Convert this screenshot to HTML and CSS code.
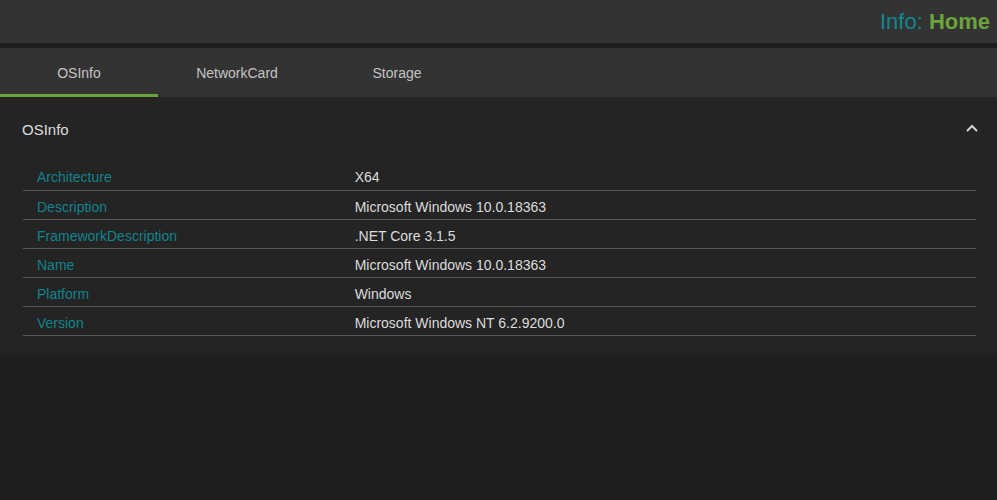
FILE: index.html
```html
<!DOCTYPE html>
<html>
<head>
<meta charset="utf-8">
<link rel="stylesheet" href="styles.css">
</head>
<body>
<header class="topbar">
  <div class="title"><span class="title-info">Info:</span> <span class="title-home">Home</span></div>
</header>
<div class="divider"></div>
<nav class="tabs">
  <div class="tab active">OSInfo</div>
  <div class="tab">NetworkCard</div>
  <div class="tab">Storage</div>
</nav>
<section class="card">
  <div class="card-head">
    <span class="card-title">OSInfo</span>
    <svg class="chevron" width="12" height="8" viewBox="0 0 12 8"><path d="M1 7 L6 2 L11 7" fill="none" stroke="#d0d0d0" stroke-width="2"/></svg>
  </div>
  <table class="info">
    <tr><td class="k">Architecture</td><td class="v">X64</td></tr>
    <tr><td class="k">Description</td><td class="v">Microsoft Windows 10.0.18363</td></tr>
    <tr><td class="k">FrameworkDescription</td><td class="v">.NET Core 3.1.5</td></tr>
    <tr><td class="k">Name</td><td class="v">Microsoft Windows 10.0.18363</td></tr>
    <tr><td class="k">Platform</td><td class="v">Windows</td></tr>
    <tr><td class="k">Version</td><td class="v">Microsoft Windows NT 6.2.9200.0</td></tr>
  </table>
</section>
</body>
</html>
```

FILE: styles.css
```css
html, body {
  margin: 0;
  padding: 0;
  background: #1f1f1f;
  font-family: "Liberation Sans", Arial, sans-serif;
}
.topbar {
  height: 43px;
  background: #333333;
  display: flex;
  align-items: center;
  justify-content: flex-end;
  padding-right: 7px;
}
.title {
  font-size: 22px;
  line-height: 43px;
}
.title-info { color: #12868f; }
.title-home { color: #6ba43a; font-weight: bold; }
.divider {
  height: 5px;
  background: #1e1e1e;
}
.tabs {
  display: flex;
  height: 49px;
  background: #333333;
}
.tab {
  width: 158px;
  display: flex;
  align-items: center;
  justify-content: center;
  font-size: 14px;
  color: #c4c4c4;
  box-sizing: border-box;
  border-bottom: 3px solid transparent;
  padding-top: 3px;
}
.tab:nth-child(3) { width: 162px; }
.tab.active {
  border-bottom-color: #6ba43a;
}
.card {
  background: #242424;
  padding: 0 19px 17px 23px;
}
.card-head {
  height: 64px;
  display: flex;
  align-items: center;
  justify-content: space-between;
  margin-left: -1px;
}
.card-title {
  font-size: 15px;
  color: #dddddd;
}
.chevron {
  margin-top: -3px;
}
.info {
  width: calc(100% - 2px);
  border-collapse: collapse;
  font-size: 14px;
}
.info td {
  box-sizing: border-box;
  height: 29px;
  padding: 4px 14px 0;
  border-bottom: 1px solid #585858;
  vertical-align: middle;
}
.info td.k {
  width: 33.33%;
  color: #11838c;
}
.info td.v {
  color: #dcdcdc;
}
```
